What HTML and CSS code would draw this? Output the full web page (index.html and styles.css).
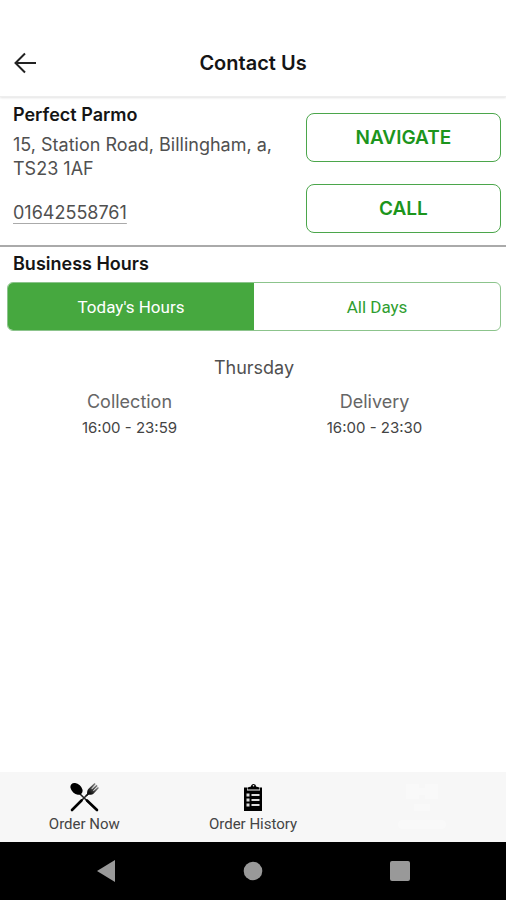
FILE: index.html
```html
<!DOCTYPE html>
<html lang="en">
<head>
<meta charset="utf-8">
<meta name="viewport" content="width=device-width, initial-scale=1">
<title>Contact Us</title>
<link rel="stylesheet" href="styles.css">
</head>
<body>
<header class="top-bar">
  <button class="icon-button" type="button">
    <svg width="24" height="24" viewBox="0 0 24 24" fill="none" stroke="#222" stroke-width="2"><path d="M13 2.500 3.500 12l9.500 9.500M4 12h20"/></svg>
  </button>
  <h1 class="title">Contact Us</h1>
</header>
<main class="content">
  <section class="contact">
    <div class="details">
      <h2 class="heading">Perfect Parmo</h2>
      <p class="address">15, Station Road, Billingham, a, TS23 1AF</p>
      <a class="phone" href="tel:01642558761">01642558761</a>
    </div>
    <div class="actions">
      <button class="action" type="button">NAVIGATE</button>
      <button class="action" type="button">CALL</button>
    </div>
  </section>
  <section class="hours">
    <h2 class="heading hours-heading">Business Hours</h2>
    <div class="segments">
      <button class="segment selected" type="button">Today's Hours</button>
      <button class="segment" type="button">All Days</button>
    </div>
    <h3 class="day">Thursday</h3>
    <dl class="times">
      <div class="service"><dt>Collection</dt><dd>16:00 - 23:59</dd></div>
      <div class="service"><dt>Delivery</dt><dd>16:00 - 23:30</dd></div>
    </dl>
  </section>
</main>
<nav class="tabs">
  <a class="tab" href="#order">
    <svg width="32" height="32" viewBox="0 0 32 32">
      <defs><linearGradient id="steel" x1="0" y1="1" x2="1" y2="0"><stop offset="0.300" stop-color="#111"/><stop offset="1" stop-color="#aaa"/></linearGradient></defs>
      <path d="M11 11 29 28.500M22 10 12 20" stroke="#222" stroke-width="1.600"/>
      <path d="M19 18.500 29 28M13.500 18.500 4 28" stroke="#000" stroke-width="2.600" stroke-linecap="round"/>
      <ellipse cx="8.500" cy="6.800" rx="6.900" ry="4.900" transform="rotate(42 8.500 6.800)"/>
      <path d="M19 12.500c0-3 .3-4.500 2-6.200L26.500 1l1.200 1-4.300 4.700.5.500 4.600-4.400 1.200 1.200-4.600 4.400.5.500 4.400-4 .9 1-4.700 5c-1.700 1.700-3.300 2-5.800 1.800l-1.800 1.600-1.300-1.300z" fill="url(#steel)"/>
    </svg>
    <span class="tab-label">Order Now</span>
  </a>
  <a class="tab" href="#history">
    <svg width="32" height="32" viewBox="0 0 32 32">
      <path d="M7 5.500h3v3h13v-3h2V29H7z"/>
      <path d="M10.500 7.500V5.500l3.500-1C14 1 19 1 19 4.500l3.500 1v2z"/>
      <circle cx="16.500" cy="3.800" r=".8" fill="#f7f7f7"/>
      <path d="M9.500 11.500h3v3h-3zM9.500 16.500h3v3h-3zM9.500 21.500h3v3h-3zM14.500 12h8v2h-8zM14.500 17h8v2h-8zM14.500 22h8v2h-8z" fill="#ddd"/>
    </svg>
    <span class="tab-label">Order History</span>
  </a>
  <a class="tab" href="#contact">
    <svg width="48" height="50" viewBox="0 0 48 50" fill="#f9f9f9">
      <path d="M8 2h13v4h6V2h13v15H27v-4h-6v4H8zM16 22h16v7H16z"/>
      <rect y="38" width="48" height="9" rx="4"/>
    </svg>
  </a>
</nav>
<footer class="system-bar">
  <button class="system-button" type="button"><svg width="20" height="22" viewBox="0 0 20 22"><path d="M1 11 19 0v22z"/></svg></button>
  <button class="system-button" type="button"><svg width="20" height="20" viewBox="0 0 20 20"><circle cx="10" cy="10" r="9.300"/></svg></button>
  <button class="system-button" type="button"><svg width="20" height="20" viewBox="0 0 20 20"><rect width="20" height="20" rx="2"/></svg></button>
</footer>
</body>
</html>
```
FILE: styles.css
```css
* { box-sizing: border-box; }

body {
  margin: 0;
  min-height: 100vh;
  display: flex;
  flex-direction: column;
  background: #fff;
  color: #505050;
  font: 18px/24px Inter, "Open Sans", sans-serif;
}

h1, h2, h3, p, dl, dd { margin: 0; }

button {
  padding: 0;
  border: 0;
  background: none;
  font: inherit;
  cursor: pointer;
}

svg { display: block; }

.top-bar {
  display: grid;
  grid-template-columns: 48px 1fr 48px;
  align-items: center;
  padding: 35px 0 5px;
  border-bottom: 1px solid #eee;
  box-shadow: 0 1px 2px #e4e4e4;
}

.icon-button {
  display: grid;
  place-items: center;
  height: 56px;
}

.title {
  color: #151515;
  font-size: 20px;
  font-weight: 600;
  text-align: center;
}

.content { flex: 1; }

.contact {
  display: flex;
  justify-content: space-between;
  padding: 6px 5px 12px 13px;
  border-bottom: 2px solid #aaa;
}

.details { width: 56%; }

.heading {
  color: #151515;
  font-size: 18px;
  font-weight: 600;
}

.address { margin: 6px 0 20px; }

.phone {
  color: inherit;
  text-decoration-color: #aaa;
  text-underline-offset: 4px;
}

.actions {
  display: flex;
  flex-direction: column;
  gap: 22px;
  width: 40%;
  padding-top: 10px;
}

.action {
  height: 49px;
  border: 1px solid #4ba64b;
  border-radius: 8px;
  color: #1c951c;
  font-size: 19px;
  font-weight: 600;
}

.hours { padding: 5px 5px 0 7px; }

.hours-heading {
  margin-bottom: 6px;
  padding-left: 6px;
}

.segments {
  display: flex;
  height: 49px;
  border: 1px solid #8cc48c;
  border-radius: 6px;
  overflow: hidden;
}

.segment {
  flex: 1;
  color: #2f9e2f;
  font-family: Roboto, sans-serif;
  font-size: 17px;
}

.selected {
  background: #46a83f;
  color: #fff;
}

.day {
  margin-top: 25px;
  font-size: 18px;
  font-weight: 400;
  text-align: center;
}

.times {
  display: flex;
  margin-top: 10px;
  padding-right: 4px;
  text-align: center;
}

.service {
  flex: 1;
  color: #666;
}

.service dd {
  margin-top: 2px;
  color: #444;
  font-size: 15px;
}

.tabs {
  display: flex;
  height: 70px;
  background: #f7f7f7;
}

.tab {
  flex: 1;
  display: flex;
  flex-direction: column;
  align-items: center;
  padding-top: 10px;
  color: #444;
  text-decoration: none;
}

.tab-label {
  font: 15px/20px Roboto, sans-serif;
}

.system-bar {
  display: flex;
  justify-content: center;
  height: 58px;
  background: #000;
}

.system-button {
  display: grid;
  place-items: center;
  width: 29%;
  fill: #999;
}
```
